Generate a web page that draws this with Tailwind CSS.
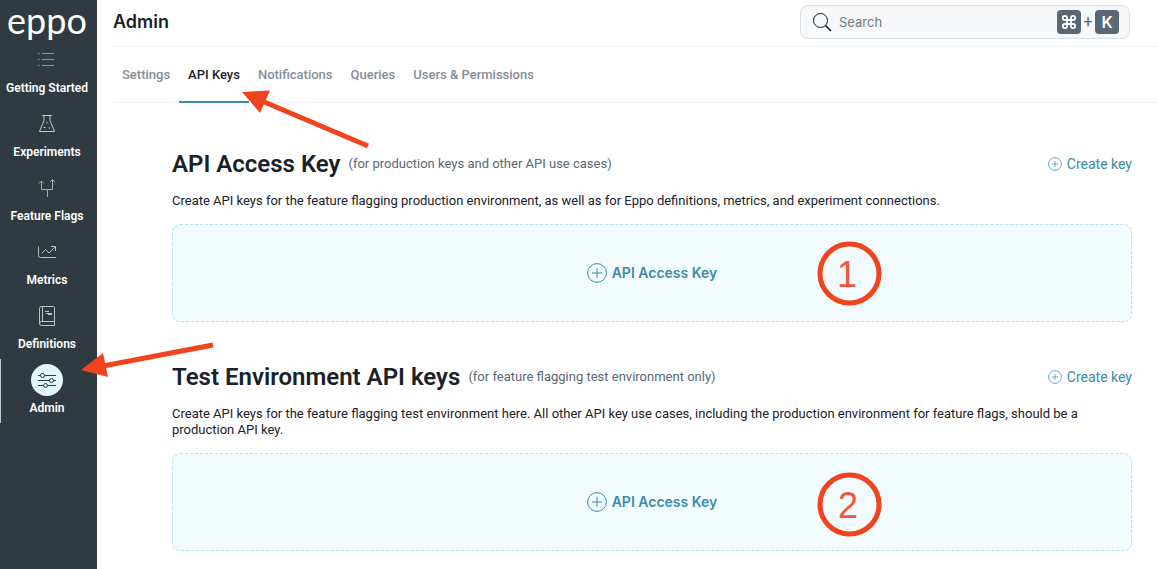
<!DOCTYPE html>
<html lang="en">
<head>
<meta charset="utf-8">
<meta name="viewport" content="width=device-width, initial-scale=1">
<title>Admin – API Keys</title>
<script src="https://cdn.jsdelivr.net/npm/@tailwindcss/browser@4"></script>
</head>
<body class="relative flex min-h-screen bg-white font-[Roboto,sans-serif] text-[13px] leading-4 text-[#1b2128]">

<aside class="w-[97px] shrink-0 bg-[#2f3b40] pr-[3px] text-white">
  <a href="#" class="flex h-[39px] items-start justify-center font-['Lato',sans-serif] text-4xl leading-10">eppo</a>
  <nav class="flex flex-col text-center text-xs leading-4 font-semibold whitespace-nowrap">
    <a href="#" class="flex h-16 flex-col items-center gap-1 pt-[5px]">
      <span class="flex size-8 items-center justify-center">
        <svg class="size-5" viewBox="0 0 20 20" fill="none" stroke="#8b9699"><path d="M5 3.500h12M5 9.500h12M5 15.500h12M1 3.500h1.500M1 9.500h1.500M1 15.500h1.500"/></svg>
      </span>Getting Started
    </a>
    <a href="#" class="flex h-16 flex-col items-center gap-1 pt-[5px]">
      <span class="flex size-8 items-center justify-center">
        <svg class="size-5" viewBox="0 0 20 20" fill="none" stroke="#c0c6c8"><path d="M5 1.500h10M7 1.500v5L2.500 17.500h15L13 6.500v-5"/><path d="M10 8v1.500M6.500 13.500h2M11.500 14h1.500"/></svg>
      </span>Experiments
    </a>
    <a href="#" class="flex h-16 flex-col items-center gap-1 pt-[5px]">
      <span class="flex size-8 items-center justify-center">
        <svg class="size-5" viewBox="0 0 20 20" fill="none" stroke="#a3acae"><path d="M10.500 19v-7.500M4.500 3v8.500h11V1.500M2 5.500l2.500-2.500 2.500 2.500M13 4l2.500-2.500 2.500 2.500"/></svg>
      </span>Feature Flags
    </a>
    <a href="#" class="flex h-16 flex-col items-center gap-1 pt-[5px]">
      <span class="flex size-8 items-center justify-center">
        <svg class="size-5" viewBox="0 0 20 20" fill="none" stroke="#b7bebf"><path d="M1.500 4.500v9q0 2 2 2H19M4.500 11.500l4-4 3.500 3.500 6-6M14 4.500h4.500V9"/></svg>
      </span>Metrics
    </a>
    <a href="#" class="flex h-16 flex-col items-center gap-1 pt-[5px]">
      <span class="flex size-8 items-center justify-center">
        <svg class="size-5" viewBox="0 0 20 20" fill="none" stroke="#c0c6c8"><path d="M17.500 15.500v-14q0-1-1-1h-12Q2.500.5 2.500 2.500v15q0 2 2 2h13v-4h-13q-2 0-2 2M5.500.5v15M8 5.500h4M9 7.500h6M11 8.500h4"/></svg>
      </span>Definitions
    </a>
    <a href="#" aria-current="page" class="flex h-16 flex-col items-center gap-1 border-l border-[#c5c9cb] pt-[5px] pr-px">
      <span class="flex size-8 items-center justify-center rounded-full bg-[#e1f5fd]">
        <svg class="size-5" viewBox="0 0 20 20" fill="none" stroke="#2f3b40"><path d="M1 5.500h2.500M7.500 5.500H19M1 10.500h11.500M16.500 10.500H19M1 15.500h5.500M10.500 15.500H19"/><circle cx="5.500" cy="5.500" r="2"/><circle cx="14.500" cy="10.500" r="2"/><circle cx="8.500" cy="15.500" r="2"/></svg>
      </span>Admin
    </a>
  </nav>
</aside>

<main class="min-w-0 flex-1 pl-4">
  <header class="flex h-[47px] items-center justify-between border-b border-[#f3f4f5] pr-7 pb-[2px]">
    <h1 class="font-[Inter,sans-serif] text-lg leading-6 font-semibold">Admin</h1>
    <label class="flex h-[34px] w-[330px] items-center rounded-lg border border-[#d9e0e8] bg-[#f6f8fa] pr-[10px] pl-[11px] text-[#5b6773]">
      <svg class="mr-[7px] size-5 shrink-0" viewBox="0 0 20 20" fill="none" stroke="#16181b"><circle cx="8.500" cy="8.500" r="7"/><path d="M13.500 13.500l5.500 5.500" stroke-width="1.600"/></svg>
      <input type="search" aria-label="Search" placeholder="Search" class="min-w-0 flex-1 bg-transparent font-[Inter,sans-serif] outline-none placeholder:text-[#73777b]">
      <kbd class="flex size-6 items-center justify-center rounded bg-[#5b6772]">
        <svg class="size-4" viewBox="0 0 16 16" fill="none" stroke="#fff" stroke-width="1.800"><path d="M6 6h4v4H6zM6 6H3.900A2.100 2.100 0 1 1 6 3.900zM10 6V3.900A2.100 2.100 0 1 1 12.100 6zM10 10h2.100A2.100 2.100 0 1 1 10 12.100zM6 10v2.100A2.100 2.100 0 1 1 3.900 10z"/></svg>
      </kbd>
      <span class="w-[14px] text-center text-base">+</span>
      <kbd class="flex size-6 items-center justify-center rounded bg-[#5b6772] font-[Inter,sans-serif] text-base font-semibold text-white">K</kbd>
    </label>
  </header>

  <nav class="flex h-14 border-b border-[#edf1f5] font-medium text-[#848e99]">
    <a href="#" class="flex items-center px-[9px]">Settings</a>
    <a href="#" aria-current="page" class="-mb-px flex items-center border-b-2 border-[#3d8ba8] px-[9px] pt-px text-[#1b2128]">API Keys</a>
    <a href="#" class="flex items-center px-[9px]">Notifications</a>
    <a href="#" class="flex items-center px-[9px]">Queries</a>
    <a href="#" class="flex items-center px-[9px]">Users &amp; Permissions</a>
  </nav>

  <div class="pt-[45px] pr-[26px] pb-4 pl-[59px]">
    <section>
      <div class="flex h-8 items-center">
        <h2 class="text-2xl font-semibold">API Access Key</h2>
        <span class="ml-2 text-[#5b6773]">(for production keys and other API use cases)</span>
        <button type="button" class="ml-auto flex items-center gap-[5px] text-sm text-[#3d8ba8]">
          <svg class="size-[14px]" viewBox="0 0 14 14" fill="none" stroke="#6aa8be"><circle cx="7" cy="7" r="6.400"/><path d="M4 7h6M7 4v6"/></svg>
          Create key
        </button>
      </div>
      <p class="mt-[13px]">Create API keys for the feature flagging production environment, as well as for Eppo definitions, metrics, and experiment connections.</p>
      <button type="button" class="mt-[15px] flex w-full items-center justify-center gap-[5px] rounded-lg border border-dashed border-[#b5e5f5] bg-[#f2fbfe] py-9 font-[Inter,sans-serif] text-sm leading-6 font-semibold text-[#3d8ba8]">
        <svg class="size-5" viewBox="0 0 20 20" fill="none" stroke="#3d8ba8"><circle cx="10" cy="10" r="9.400"/><path d="M5 10h10M10 5v10"/></svg>
        API Access Key
      </button>
    </section>

    <section class="mt-[39px]">
      <div class="flex h-8 items-center">
        <h2 class="text-2xl font-semibold">Test Environment API keys</h2>
        <span class="ml-2 text-[#5b6773]">(for feature flagging test environment only)</span>
        <button type="button" class="ml-auto flex items-center gap-[5px] text-sm text-[#3d8ba8]">
          <svg class="size-[14px]" viewBox="0 0 14 14" fill="none" stroke="#6aa8be"><circle cx="7" cy="7" r="6.400"/><path d="M4 7h6M7 4v6"/></svg>
          Create key
        </button>
      </div>
      <p class="mt-[13px]">Create API keys for the feature flagging test environment here. All other API key use cases, including the production environment for feature flags, should be a production API key.</p>
      <button type="button" class="mt-[15px] flex w-full items-center justify-center gap-[5px] rounded-lg border border-dashed border-[#b5e5f5] bg-[#f2fbfe] py-9 font-[Inter,sans-serif] text-sm leading-6 font-semibold text-[#3d8ba8]">
        <svg class="size-5" viewBox="0 0 20 20" fill="none" stroke="#3d8ba8"><circle cx="10" cy="10" r="9.400"/><path d="M5 10h10M10 5v10"/></svg>
        API Access Key
      </button>
    </section>
  </div>
</main>

<!-- Annotation layer: arrows and step numbers -->
<svg class="pointer-events-none absolute top-0 left-0 font-['Liberation_Sans',sans-serif] text-[36px]" width="1158" height="569" viewBox="0 0 1158 569" fill="none" stroke="#f1431d" stroke-width="5">
  <path d="M368 146L262 101M213 345L103 366"/>
  <path d="M242 92L270 90.500L260 113ZM81 370L103 353L108 377Z" fill="#f1431d" stroke="none"/>
  <circle cx="849.500" cy="273.500" r="29.500"/>
  <circle cx="849.500" cy="504.500" r="29.500"/>
  <text x="847" y="287" text-anchor="middle" fill="#f4553b" stroke="none">1</text>
  <text x="848" y="518" text-anchor="middle" fill="#f4553b" stroke="none">2</text>
</svg>
</body>
</html>
